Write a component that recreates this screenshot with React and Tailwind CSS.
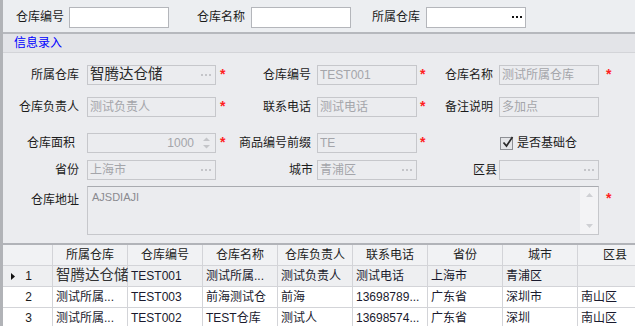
import React from "react";

const COLS = ["所属仓库", "仓库编号", "仓库名称", "仓库负责人", "联系电话", "省份", "城市", "区县"];

const ROWS = [
  { no: "1", current: true, cells: ["智腾达仓储", "TEST001", "测试所属...", "测试负责人", "测试电话", "上海市", "青浦区", ""] },
  { no: "2", cells: ["测试所属...", "TEST003", "前海测试仓", "前海", "13698789...", "广东省", "深圳市", "南山区"] },
  { no: "3", cells: ["测试所属...", "TEST002", "TEST仓库", "测试人", "13698574...", "广东省", "深圳", "南山区"] },
];

function Dots({ dark }) {
  const dot = dark ? "h-[2px] w-[2px] bg-[#111]" : "h-[2px] w-[2px] bg-[#c4c5c9]";
  return (
    <span className="flex items-center gap-[2px]">
      <span className={dot} />
      <span className={dot} />
      <span className={dot} />
    </span>
  );
}

function Star({ className = "" }) {
  return <span className={`text-[14px] font-bold leading-none text-[#ff1f1f] ${className}`}>*</span>;
}

function Label({ children, w }) {
  return <div className={`shrink-0 text-right text-[12px] text-[#1b1b1b] ${w}`}>{children}</div>;
}

function Field({ value, w, dots, big }) {
  return (
    <div className={`flex h-[20px] shrink-0 items-center border border-[#c6c7cb] bg-[#ebecef] pl-[2px] pr-[4px] ${w}`}>
      <span className={`flex-1 truncate ${big ? "text-[14.5px] text-[#2a2a2a]" : "text-[12px] text-[#a4a5aa]"}`}>{value}</span>
      {dots ? <Dots /> : null}
    </div>
  );
}

function FormRow({ className = "", children }) {
  return <div className={`flex h-[20px] items-center ${className}`}>{children}</div>;
}

export default function App() {
  return (
    <div className="h-[326px] w-[635px] overflow-hidden border-l-[3px] border-[#b1b3b7] bg-[#ebecef] font-['Liberation_Sans','Noto_Sans_CJK_SC',sans-serif] text-[12px] text-[#1b1b1b]">
      {/* search bar */}
      <div className="flex h-[32px] items-center bg-[#eceef1] pt-[2px]">
        <span className="ml-[13px]">仓库编号</span>
        <div className="ml-[5px] h-[21px] w-[100px] border border-[#b4b6bb] bg-white" />
        <span className="ml-[28px]">仓库名称</span>
        <div className="ml-[6px] h-[21px] w-[100px] border border-[#b4b6bb] bg-white" />
        <span className="ml-[21px]">所属仓库</span>
        <div className="ml-[6px] flex h-[21px] w-[100px] items-center justify-end border border-[#b4b6bb] bg-white pr-[3px]">
          <Dots dark />
        </div>
      </div>
      <div className="h-[2px] bg-[#b6b8bd]" />

      {/* group header */}
      <div className="flex h-[19px] items-center border-b border-[#d3d4d8] bg-[#e3e4e8] pl-[11px] text-[12px] text-[#0000ff]">
        信息录入
      </div>

      {/* form */}
      <div className="flex flex-col pt-[12px]">
        <FormRow>
          <Label w="w-[76px]">所属仓库</Label>
          <div className="ml-[8px]"><Field value="智腾达仓储" w="w-[129px]" dots big /></div>
          <div className="w-[14px] pl-[4px]"><Star /></div>
          <Label w="w-[81px]">仓库编号</Label>
          <div className="ml-[6px]"><Field value="TEST001" w="w-[100px]" /></div>
          <div className="w-[14px] pl-[3px]"><Star /></div>
          <Label w="w-[62px]">仓库名称</Label>
          <div className="ml-[6px]"><Field value="测试所属仓库" w="w-[100px]" /></div>
          <div className="pl-[7px]"><Star /></div>
        </FormRow>

        <FormRow className="mt-[12px]">
          <Label w="w-[76px]">仓库负责人</Label>
          <div className="ml-[8px]"><Field value="测试负责人" w="w-[129px]" /></div>
          <div className="w-[14px] pl-[4px]"><Star /></div>
          <Label w="w-[81px]">联系电话</Label>
          <div className="ml-[6px]"><Field value="测试电话" w="w-[100px]" /></div>
          <div className="w-[14px] pl-[3px]"><Star /></div>
          <Label w="w-[62px]">备注说明</Label>
          <div className="ml-[6px]"><Field value="多加点" w="w-[100px]" /></div>
        </FormRow>

        <FormRow className="mt-[16px]">
          <Label w="w-[72px]">仓库面积</Label>
          <div className="ml-[12px] flex h-[20px] w-[129px] shrink-0 items-center border border-[#c6c7cb] bg-[#ebecef] pr-[4px]">
            <span className="flex-1 pr-[8px] text-right text-[12px] text-[#a4a5aa]">1000</span>
            <svg width="9" height="14" viewBox="0 0 9 14">
              <path d="M1 5 L4.5 1.5 L8 5 Z" fill="#c4c5c9" />
              <path d="M1 9 L4.5 12.5 L8 9 Z" fill="#c4c5c9" />
            </svg>
          </div>
          <div className="w-[14px] pl-[4px]"><Star /></div>
          <Label w="w-[81px]">商品编号前缀</Label>
          <div className="ml-[6px]"><Field value="TE" w="w-[100px]" /></div>
          <div className="w-[14px] pl-[3px]"><Star /></div>
          <div className="w-[62px] shrink-0" />
          <div className="ml-[7px] flex items-center gap-[4px]">
            <span className="relative flex h-[13px] w-[13px] items-center justify-center border border-[#8d8f94] bg-[#e4e5e8]">
              <svg width="12" height="12" viewBox="0 0 12 12" className="absolute -top-[2px] left-[1px]">
                <path d="M1.5 6.5 L4.5 10 L10.5 1" stroke="#2b2b2b" strokeWidth="1.8" fill="none" />
              </svg>
            </span>
            <span className="text-[12px] text-[#1b1b1b]">是否基础仓</span>
          </div>
        </FormRow>

        <FormRow className="mt-[7px]">
          <Label w="w-[76px]">省份</Label>
          <div className="ml-[8px]"><Field value="上海市" w="w-[129px]" dots /></div>
          <div className="w-[14px]" />
          <Label w="w-[83px]">城市</Label>
          <div className="ml-[4px]"><Field value="青浦区" w="w-[100px]" dots /></div>
          <div className="w-[14px]" />
          <Label w="w-[66px]">区县</Label>
          <div className="ml-[2px]"><Field value="" w="w-[100px]" dots /></div>
        </FormRow>

        <div className="mt-[6px] flex">
          <Label w="w-[76px] pt-[5px]">仓库地址</Label>
          <div className="ml-[8px] flex h-[49px] w-[512px] border border-[#c6c7cb] border-t-[#a9abb0] bg-[#ebecef]">
            <span className="flex-1 pl-[4px] pt-[2px] text-[11px] text-[#8a8a8f]">AJSDIAJI</span>
            <div className="flex w-[18px] flex-col items-center justify-between bg-[#f3f3f5] py-[6px]">
              <svg width="7" height="4" viewBox="0 0 7 4"><path d="M0 4 L3.5 0 L7 4 Z" fill="#cfd0d4" /></svg>
              <svg width="7" height="4" viewBox="0 0 7 4"><path d="M0 0 L3.5 4 L7 0 Z" fill="#cfd0d4" /></svg>
            </div>
          </div>
          <div className="pl-[7px] pt-[4px]"><Star /></div>
        </div>
      </div>

      {/* grid */}
      <div className="mt-[8px] border-t-2 border-[#b1b3b8] bg-white">
        <div className="flex h-[21px] bg-[#f1f2f4]">
          <div className="w-[50px] shrink-0 border-r border-b border-[#d3d4d8]" />
          {COLS.map((c) => (
            <div key={c} className="flex w-[75px] shrink-0 items-center justify-center border-r border-b border-[#d3d4d8] text-[12px] text-[#222]">
              {c}
            </div>
          ))}
        </div>
        {ROWS.map((r) => (
          <div key={r.no} className={`flex h-[21px] ${r.current ? "bg-[#eeeff1]" : "bg-white"}`}>
            <div className="relative flex w-[50px] shrink-0 items-center justify-center border-r border-b border-[#d3d4d8] text-[12px]">
              {r.current ? (
                <svg width="4" height="7" viewBox="0 0 4 7" className="absolute left-[8px] top-[7px]">
                  <path d="M0 0 L4 3.5 L0 7 Z" fill="#111" />
                </svg>
              ) : null}
              <span className="pl-[2px]">{r.no}</span>
            </div>
            {r.cells.map((v, i) => (
              <div
                key={i}
                className={`flex w-[75px] shrink-0 items-center whitespace-nowrap border-r border-b border-[#d3d4d8] pl-[3px] ${
                  i === 0 && r.current ? "overflow-visible text-[14.5px] text-[#333]" : "overflow-hidden text-[12px] text-[#1a1a2e]"
                }`}
              >
                {v}
              </div>
            ))}
          </div>
        ))}
      </div>
    </div>
  );
}
